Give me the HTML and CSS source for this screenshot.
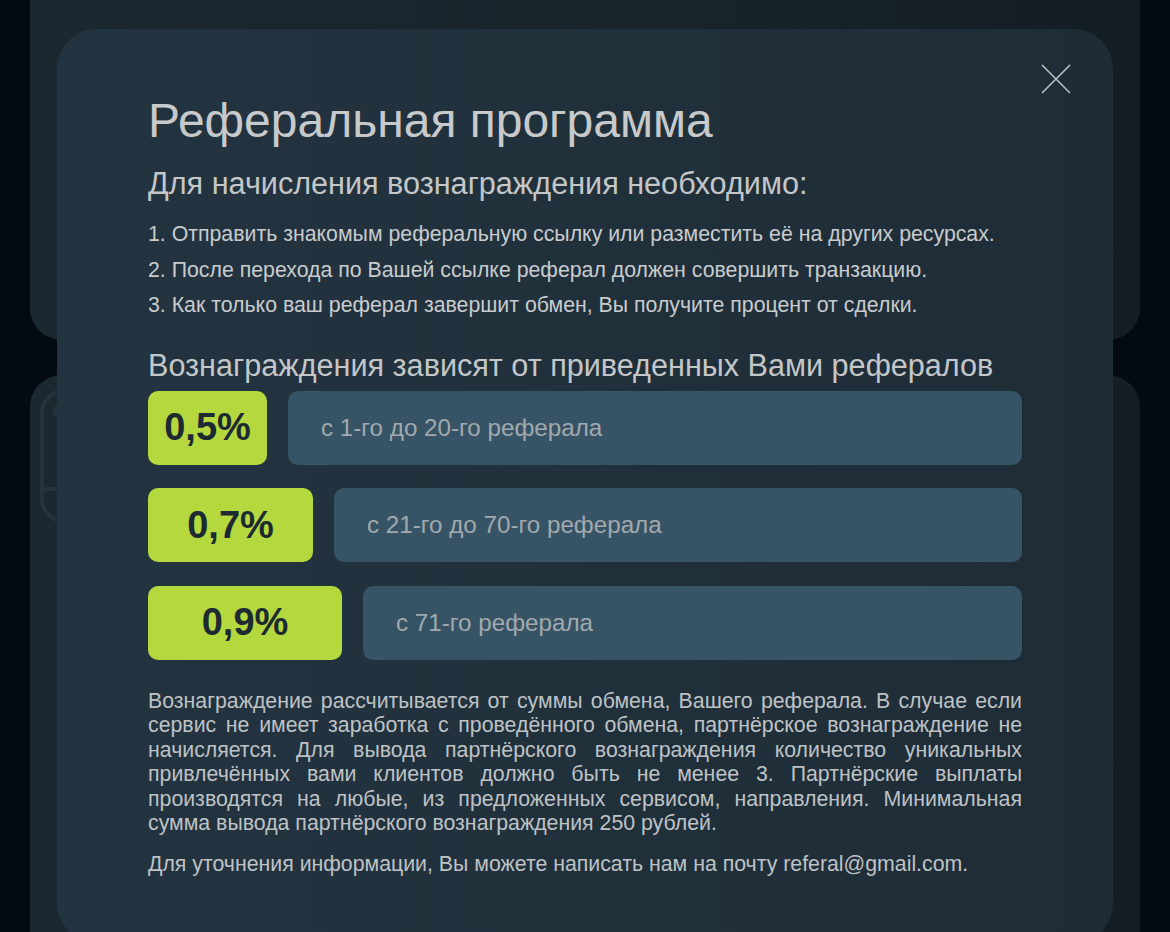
FILE: index.html
```html
<!DOCTYPE html>
<html lang="ru">
<head>
<meta charset="utf-8">
<title>Реферальная программа</title>
<link rel="stylesheet" href="styles.css">
</head>
<body>
<div class="page">
  <div class="bg-card bg-top"></div>
  <div class="bg-card bg-bottom">
    <svg class="bg-icon" width="60" height="140" viewBox="0 0 60 140">
      <rect x="8" y="2" width="80" height="130" rx="22" fill="none" stroke="#27333a" stroke-width="4"/>
      <line x1="10" y1="100" x2="60" y2="100" stroke="#27333a" stroke-width="4"/>
      <circle cx="26" cy="22" r="7" fill="#27333a"/>
    </svg>
  </div>
</div>

<div class="modal">
  <button class="close" aria-label="Закрыть">
    <svg width="30" height="30" viewBox="0 0 30 30">
      <path d="M1 1 L29 29 M29 1 L1 29" stroke="#bdbdbd" stroke-width="1.6" fill="none"/>
    </svg>
  </button>
  <h1 class="title">Реферальная программа</h1>
  <h2 class="subtitle">Для начисления вознаграждения необходимо:</h2>
  <ol class="steps">
    <li>1. Отправить знакомым реферальную ссылку или разместить её на других ресурсах.</li>
    <li>2. После перехода по Вашей ссылке реферал должен совершить транзакцию.</li>
    <li>3. Как только ваш реферал завершит обмен, Вы получите процент от сделки.</li>
  </ol>
  <h2 class="subtitle sub2">Вознаграждения зависят от приведенных Вами рефералов</h2>
  <div class="tiers">
    <div class="tier">
      <div class="badge b1">0,5%</div>
      <div class="info">с 1-го до 20-го реферала</div>
    </div>
    <div class="tier">
      <div class="badge b2">0,7%</div>
      <div class="info">с 21-го до 70-го реферала</div>
    </div>
    <div class="tier">
      <div class="badge b3">0,9%</div>
      <div class="info">с 71-го реферала</div>
    </div>
  </div>
  <p class="note">Вознаграждение рассчитывается от суммы обмена, Вашего реферала. В случае если сервис не имеет заработка с проведённого обмена, партнёрское вознаграждение не начисляется. Для вывода партнёрского вознаграждения количество уникальных привлечённых вами клиентов должно быть не менее 3. Партнёрские выплаты производятся на любые, из предложенных сервисом, направления. Минимальная сумма вывода партнёрского вознаграждения 250 рублей.</p>
  <p class="note contact">Для уточнения информации, Вы можете написать нам на почту referal@gmail.com.</p>
</div>
</body>
</html>
```

FILE: styles.css
```css
* { box-sizing: border-box; }
html, body {
  margin: 0;
  height: 100%;
}
body {
  background: #040a11;
  font-family: "Liberation Sans", Arial, sans-serif;
  overflow: hidden;
}
.page {
  padding: 0 30px;
  display: flex;
  flex-direction: column;
  gap: 35px;
  height: 932px;
}
.bg-card {
  background: linear-gradient(90deg, #1c2830 0%, #18232a 60%, #141d23 100%);
}
.bg-top {
  height: 340px;
  border-radius: 0 0 32px 32px;
}
.bg-bottom {
  flex: 1;
  border-radius: 32px 32px 0 0;
  position: relative;
  overflow: hidden;
}
.bg-icon {
  position: absolute;
  left: 4px;
  top: 14px;
}
.modal {
  position: absolute;
  left: 57px;
  top: 29px;
  width: 1056px;
  height: 914px;
  border-radius: 40px;
  background: linear-gradient(90deg, #233441 0%, #20303b 55%, #1e2c36 100%);
  padding: 64px 91px 0 91px;
  color: #c6c8ca;
}
.close {
  position: absolute;
  right: 42px;
  top: 35px;
  width: 30px;
  height: 30px;
  padding: 0;
  border: 0;
  background: none;
  cursor: pointer;
}
.close svg { display: block; }
.title {
  margin: 0;
  font-size: 48px;
  font-weight: 400;
  line-height: 56px;
  color: #c8c9ca;
}
.subtitle {
  margin: 16px 0 0;
  font-size: 30.6px;
  font-weight: 400;
  line-height: 36px;
  color: #c4c6c8;
}
.steps {
  list-style: none;
  margin: 16px 0 0;
  padding: 0;
  font-size: 21.3px;
  line-height: 35.5px;
  color: #c9cbcd;
}
.sub2 {
  margin-top: 23px;
}
.tiers {
  margin-top: 8px;
  display: flex;
  flex-direction: column;
  gap: 23.5px;
}
.tier {
  display: flex;
  gap: 21px;
  height: 74px;
}
.badge {
  background: #b5d83e;
  border-radius: 10px;
  display: flex;
  align-items: center;
  justify-content: center;
  font-size: 38px;
  font-weight: 700;
  color: #1e2a32;
}
.b1 { width: 119px; }
.b2 { width: 165px; }
.b3 { width: 194px; }
.info {
  flex: 1;
  background: #375466;
  border-radius: 10px;
  display: flex;
  align-items: center;
  padding-left: 33px;
  font-size: 24.2px;
  color: #a1a9ae;
}
.note {
  margin: 29px 0 0;
  font-size: 21.3px;
  line-height: 24.5px;
  text-align: justify;
  color: #bfc2c5;
}
.contact {
  margin-top: 16px;
}
```
